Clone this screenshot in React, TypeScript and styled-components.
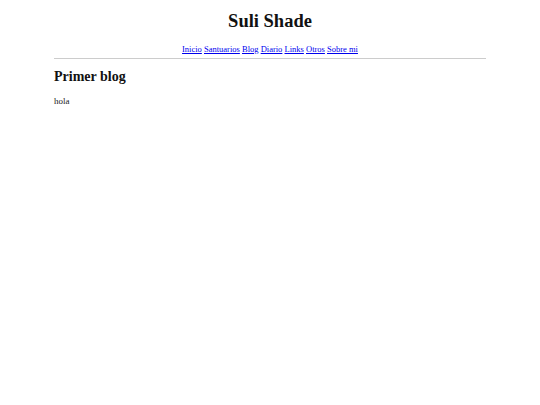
import styled, { createGlobalStyle } from 'styled-components';

const GlobalStyle = createGlobalStyle`
  html, body {
    margin: 0;
    padding: 0;
    background: #fff;
  }
  body {
    font-family: "Liberation Serif", Georgia, serif;
    color: #111;
  }
`;

const links = ['Inicio', 'Santuarios', 'Blog', 'Diario', 'Links', 'Otros', 'Sobre mi'];

export default function App() {
  return (
    <>
      <GlobalStyle />
      <Page>
        <Header>
          <Title>Suli Shade</Title>
          <Nav>
            {links.map((l, i) => (
              <span key={l}>
                <NavLink href="#">{l}</NavLink>
                {i < links.length - 1 ? ' ' : ''}
              </span>
            ))}
          </Nav>
        </Header>
        <Post>
          <PostTitle>Primer blog</PostTitle>
          <PostBody>hola</PostBody>
        </Post>
      </Page>
    </>
  );
}

const Page = styled.div`
  width: 432px;
  margin: 0 auto;
  padding-top: 10px;
`;

const Header = styled.header`
  text-align: center;
  border-bottom: 1px solid #ccc;
  padding-bottom: 3px;
`;

const Title = styled.h1`
  font-size: 18.5px;
  font-weight: bold;
  margin: 0 0 11px;
  line-height: 22px;
`;

const Nav = styled.nav`
  font-size: 8.5px;
  line-height: 12px;
`;

const NavLink = styled.a`
  color: #0000ee;
`;

const Post = styled.article`
  padding-top: 10px;
`;

const PostTitle = styled.h2`
  font-size: 14px;
  margin: 0 0 11px;
  line-height: 16px;
`;

const PostBody = styled.p`
  font-size: 9px;
  margin: 0;
  color: #222;
`;
